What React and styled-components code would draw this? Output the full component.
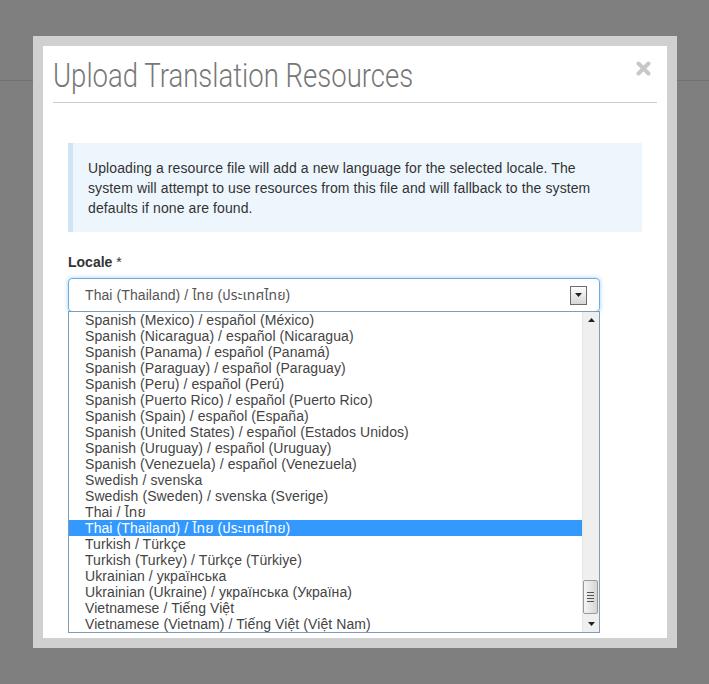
import React from "react";
import styled, { createGlobalStyle } from "styled-components";

const GlobalStyle = createGlobalStyle`
  html, body {
    margin: 0;
    padding: 0;
    background: #7f7f7f;
  }
  body {
    font-family: "Liberation Sans", Arial, "Noto Sans Thai", sans-serif;
    color: #333;
  }
`;

const Page = styled.div`
  height: 684px;
  background: #7f7f7f;
`;

const PageHeader = styled.div`
  height: 80px;
  border-bottom: 1px solid #717171;
`;

const Overlay = styled.div`
  position: fixed;
  inset: 0;
  padding: 36px 0 0 33px;
`;

const Modal = styled.div`
  width: 624px;
  height: 592px;
  background: #fff;
  border: 10px solid #d0d0d0;
`;

const Header = styled.div`
  margin: 0 10px;
  padding: 11px 0 8px;
  border-bottom: 1px solid #cdcdcd;
  display: flex;
  justify-content: space-between;
  align-items: flex-start;
`;

const Title = styled.h3`
  margin: 0;
  font-family: Roboto, "Liberation Sans", sans-serif;
  font-weight: 300;
  font-size: 34px;
  line-height: 37px;
  color: #777;
  white-space: nowrap;
  transform: scaleX(0.81);
  transform-origin: left center;
`;

const Close = styled.span`
  display: flex;
  margin: 4px 6px 0 0;
`;

const Body = styled.div`
  margin: 0 10px;
  padding: 40px 15px 0;
`;

const Alert = styled.div`
  background: #eef6fd;
  border-left: 5px solid #d1e4f3;
  padding: 15px 15px 14px;
  font-size: 14px;
  line-height: 20px;
  letter-spacing: 0.1px;
  color: #333;
`;

const Label = styled.div`
  margin-top: 20px;
  font-size: 14px;
  line-height: 20px;
  color: #333;

  b {
    font-weight: bold;
  }
`;

const SelectWrap = styled.div`
  position: relative;
  width: 532px;
  margin-top: 6px;
`;

const SelectBox = styled.div`
  box-sizing: border-box;
  height: 34px;
  border: 1px solid #66afe9;
  border-radius: 4px;
  box-shadow: 0 0 4px rgba(102, 175, 233, 0.6);
  display: flex;
  align-items: center;
  justify-content: space-between;
  padding: 0 12px 0 16px;
  font-size: 14px;
  letter-spacing: 0.08px;
  color: #555;
`;

const ArrowBtn = styled.div`
  box-sizing: border-box;
  width: 17px;
  height: 19px;
  border: 1px solid #6b6b6b;
  background: linear-gradient(#fdfdfd, #d6d6d6);
  display: flex;
  align-items: center;
  justify-content: center;
`;

const Dropdown = styled.div`
  position: absolute;
  top: 33px;
  left: 0;
  width: 532px;
  box-sizing: border-box;
  height: 322px;
  border: 1px solid #7f9db9;
  background: #fff;
  display: flex;
`;

const Options = styled.div`
  flex: 1;
  overflow: hidden;
`;

const Option = styled.div`
  height: 16px;
  line-height: 16px;
  padding-left: 16px;
  font-size: 14px;
  letter-spacing: 0.08px;
  white-space: nowrap;
  color: ${(p) => (p.$selected ? "#fff" : "#444")};
  background: ${(p) => (p.$selected ? "#3399ff" : "transparent")};
`;

const Scrollbar = styled.div`
  width: 16px;
  background: #efefef;
  border-left: 1px solid #e6e6e6;
  display: flex;
  flex-direction: column;
  align-items: center;
`;

const ScrollArrow = styled.div`
  height: 16px;
  display: flex;
  align-items: center;
  justify-content: center;
`;

const Track = styled.div`
  flex: 1;
  width: 100%;
  display: flex;
  flex-direction: column;
  justify-content: flex-end;
  padding-bottom: 2px;
  box-sizing: border-box;
`;

const Thumb = styled.div`
  box-sizing: border-box;
  height: 34px;
  margin: 0 1px 0 0;
  border: 1px solid #9a9a9a;
  border-radius: 2px;
  background: linear-gradient(to right, #f4f4f4, #e2e2e2 60%, #d4d4d4);
  display: flex;
  flex-direction: column;
  align-items: center;
  justify-content: center;
  gap: 2px;
`;

const Grip = styled.div`
  width: 7px;
  height: 1px;
  background: #555;
`;

const options = [
  "Spanish (Mexico) / español (México)",
  "Spanish (Nicaragua) / español (Nicaragua)",
  "Spanish (Panama) / español (Panamá)",
  "Spanish (Paraguay) / español (Paraguay)",
  "Spanish (Peru) / español (Perú)",
  "Spanish (Puerto Rico) / español (Puerto Rico)",
  "Spanish (Spain) / español (España)",
  "Spanish (United States) / español (Estados Unidos)",
  "Spanish (Uruguay) / español (Uruguay)",
  "Spanish (Venezuela) / español (Venezuela)",
  "Swedish / svenska",
  "Swedish (Sweden) / svenska (Sverige)",
  "Thai / ไทย",
  "Thai (Thailand) / ไทย (ประเทศไทย)",
  "Turkish / Türkçe",
  "Turkish (Turkey) / Türkçe (Türkiye)",
  "Ukrainian / українська",
  "Ukrainian (Ukraine) / українська (Україна)",
  "Vietnamese / Tiếng Việt",
  "Vietnamese (Vietnam) / Tiếng Việt (Việt Nam)",
];

const selected = "Thai (Thailand) / ไทย (ประเทศไทย)";

const Triangle = ({ up }) => (
  <svg width="7" height="4" viewBox="0 0 7 4">
    <path d={up ? "M0 4 L3.5 0 L7 4 Z" : "M0 0 L7 0 L3.5 4 Z"} fill="#222" />
  </svg>
);

const CloseIcon = () => (
  <svg width="15" height="15" viewBox="0 0 15 15">
    <path
      d="M2.5 2.5 L12.5 12.5 M12.5 2.5 L2.5 12.5"
      stroke="#c8c8c8"
      strokeWidth="4"
      strokeLinecap="round"
    />
  </svg>
);

export default function App() {
  return (
    <Page>
      <GlobalStyle />
      <PageHeader />
      <Overlay>
        <Modal>
          <Header>
            <Title>Upload Translation Resources</Title>
            <Close>
              <CloseIcon />
            </Close>
          </Header>
          <Body>
            <Alert>
              Uploading a resource file will add a new language for the selected locale. The
              <br />
              system will attempt to use resources from this file and will fallback to the system
              <br />
              defaults if none are found.
            </Alert>
            <Label>
              <b>Locale</b> *
            </Label>
            <SelectWrap>
              <SelectBox>
                <span>{selected}</span>
                <ArrowBtn>
                  <Triangle />
                </ArrowBtn>
              </SelectBox>
              <Dropdown>
                <Options>
                  {options.map((o) => (
                    <Option key={o} $selected={o === selected}>
                      {o}
                    </Option>
                  ))}
                </Options>
                <Scrollbar>
                  <ScrollArrow>
                    <Triangle up />
                  </ScrollArrow>
                  <Track>
                    <Thumb>
                      <Grip />
                      <Grip />
                      <Grip />
                      <Grip />
                    </Thumb>
                  </Track>
                  <ScrollArrow>
                    <Triangle />
                  </ScrollArrow>
                </Scrollbar>
              </Dropdown>
            </SelectWrap>
          </Body>
        </Modal>
      </Overlay>
    </Page>
  );
}
